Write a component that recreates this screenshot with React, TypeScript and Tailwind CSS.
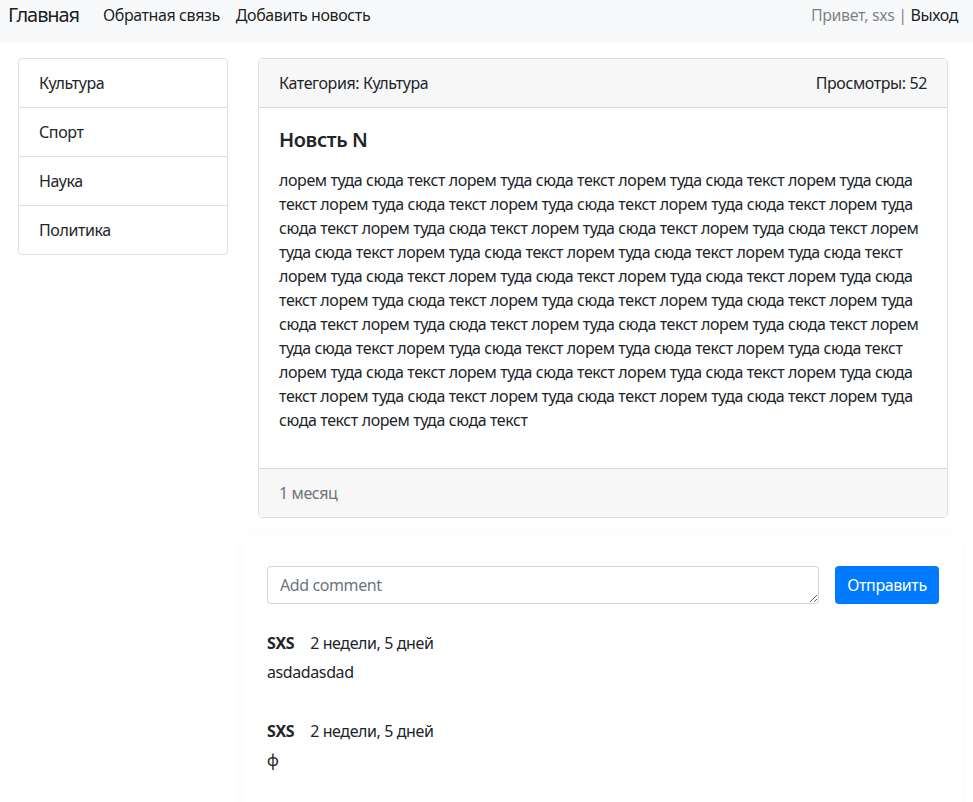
import React from "react";

const categories = ["Культура", "Спорт", "Наука", "Политика"];

const comments = [
  { author: "SXS", date: "2 недели, 5 дней", text: "asdadasdad" },
  { author: "SXS", date: "2 недели, 5 дней", text: "ф" },
];

const body = Array(39).fill("лорем туда сюда текст").join(" ");

function Navbar() {
  return (
    <nav className="flex h-[42px] items-start justify-between bg-[#f8f9fa] pl-2 pr-[15px]">
      <div className="flex items-start">
        <a className="mr-4 text-[20px] leading-[30px] tracking-[-1.1px] text-black/90">Главная</a>
        <a className="px-2 pt-[3px] leading-6 text-black/90">Обратная связь</a>
        <a className="px-2 pt-[3px] leading-6 text-black/90">Добавить новость</a>
      </div>
      <div className="pt-[3px] leading-6">
        <span className="text-black/50">Привет, sxs | </span>
        <a className="text-black/90">Выход</a>
      </div>
    </nav>
  );
}

function Sidebar() {
  return (
    <div className="w-[210px] shrink-0 self-start rounded border border-black/[.125]">
      {categories.map((c, i) => (
        <div
          key={c}
          className={
            "px-5 py-3 leading-6 text-[#212529] " +
            (i < categories.length - 1 ? "border-b border-black/[.125]" : "")
          }
        >
          {c}
        </div>
      ))}
    </div>
  );
}

function NewsCard() {
  return (
    <div className="rounded border border-black/[.125]">
      <div className="flex justify-between border-b border-black/[.125] bg-[#f7f7f7] px-5 py-3 leading-6">
        <span>Категория: Культура</span>
        <span>Просмотры: 52</span>
      </div>
      <div className="p-5">
        <h5 className="mb-4 text-[20px] font-semibold leading-6">Новсть N</h5>
        <p className="mb-4 leading-6">{body}</p>
      </div>
      <div className="border-t border-black/[.125] bg-[#f7f7f7] px-5 py-3 leading-6 text-[#6c757d]">
        1 месяц
      </div>
    </div>
  );
}

function Comments() {
  return (
    <div className="-ml-4 -mr-[15px] mt-4 bg-white pl-[25px] pr-[24px] pt-[32px] shadow-[0_0_12px_rgba(0,0,0,0.025)]">
      <form className="flex items-start gap-4" onSubmit={(e) => e.preventDefault()}>
        <textarea
          rows={1}
          placeholder="Add comment"
          className="h-[38px] flex-1 rounded border border-[#ced4da] px-3 py-[6px] leading-6 text-[#495057] placeholder:text-[#6c757d] outline-none"
        />
        <button className="h-[38px] w-[104px] rounded bg-[#007bff] leading-6 text-white">Отправить</button>
      </form>
      <div className="mt-[27px] pb-2">
        {comments.map((c, i) => (
          <div key={i} className="mb-[35px]">
            <div className="leading-6">
              <b className="font-bold">{c.author}</b>
              <span className="ml-4">{c.date}</span>
            </div>
            <div className="mt-[5px] leading-6">{c.text}</div>
          </div>
        ))}
      </div>
    </div>
  );
}

export default function App() {
  return (
    <div
      className="min-h-screen bg-white text-base tracking-[-0.4px] text-[#212529]"
      style={{ fontFamily: '"Noto Sans", "Open Sans", sans-serif' }}
    >
      <Navbar />
      <div className="mt-4 flex gap-[30px] pl-[18px] pr-[25px]">
        <Sidebar />
        <div className="flex-1">
          <NewsCard />
          <Comments />
        </div>
      </div>
    </div>
  );
}
